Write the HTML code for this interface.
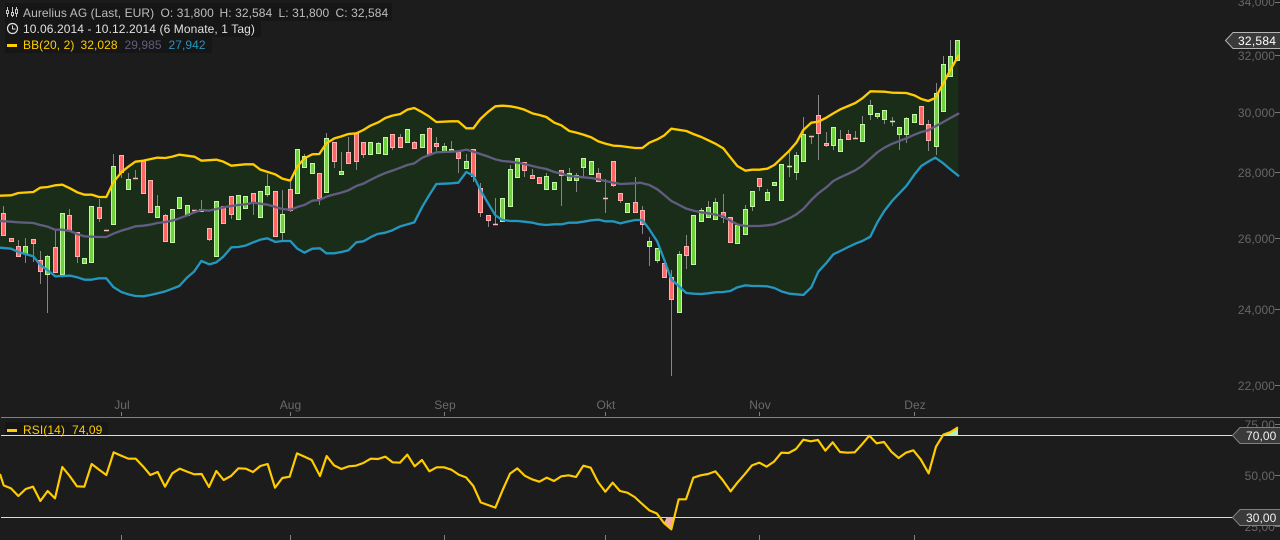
<!DOCTYPE html>
<html><head><meta charset="utf-8"><style>
html,body{margin:0;padding:0;background:#1c1c1c;width:1280px;height:540px;overflow:hidden}
svg{display:block}
text{font-family:"Liberation Sans",sans-serif;font-size:12px;letter-spacing:.08px}
</style></head><body>
<svg width="1280" height="540" viewBox="0 0 1280 540" xmlns="http://www.w3.org/2000/svg">
<rect width="1280" height="540" fill="#1c1c1c"/>
<g transform="scale(.33333)">
<polygon fill="#1a2d19" points="0,587 33,586 55,579 100,576 121,563 143,561 165,556 187,554 210,565 232,577 253,584 275,584 297,591 319,591 340,547 364,517 385,500 406,485 430,482 472,473 496,474 517,470 538,464 583,470 604,482 649,479 670,485 694,497 736,493 760,493 781,509 826,523 847,536 871,542 892,500 913,475 937,463 958,462 979,430 1003,415 1024,409 1045,402 1069,400 1090,390 1111,377 1135,367 1156,354 1177,347 1201,342 1222,329 1243,324 1267,337 1288,350 1309,366 1354,364 1375,364 1399,385 1420,385 1441,357 1465,335 1486,319 1507,317 1531,319 1552,323 1573,329 1597,340 1618,345 1639,351 1663,368 1684,376 1708,393 1729,398 1750,404 1774,412 1795,424 1816,431 1840,437 1861,438 1882,441 1906,444 1927,444 1948,428 1972,418 1993,406 2014,386 2059,393 2080,402 2104,411 2125,421 2146,431 2170,445 2191,472 2212,498 2236,512 2257,509 2278,509 2302,506 2323,495 2344,475 2368,452 2389,428 2410,390 2434,368 2455,365 2479,353 2500,340 2521,328 2545,318 2566,309 2587,295 2611,274 2653,275 2677,278 2719,279 2743,286 2764,297 2785,303 2806,294 2830,250 2851,210 2875,168 2875,1200 0,1200"/>
<polygon fill="#1c1c1c" points="0,743 33,746 55,756 76,762 100,769 121,795 142,810 166,829 187,828 210,827 232,832 253,839 275,839 297,835 319,835 340,861 364,876 385,883 406,888 430,889 451,885 472,880 496,874 517,866 538,858 562,832 583,814 604,783 628,793 649,787 670,770 694,742 715,741 736,737 760,727 781,719 802,715 826,726 847,723 871,723 892,746 913,758 937,746 960,745 979,760 1003,760 1024,756 1045,751 1069,727 1090,724 1111,712 1132,702 1156,698 1177,691 1201,679 1222,673 1243,667 1267,620 1288,585 1309,552 1333,551 1354,550 1375,548 1399,516 1420,527 1441,570 1465,611 1486,646 1507,660 1531,663 1552,663 1573,665 1597,668 1618,673 1639,675 1663,673 1684,673 1708,668 1729,668 1750,665 1774,661 1795,659 1816,664 1840,664 1861,670 1882,665 1906,660 1927,660 1948,688 1972,725 1993,780 2014,838 2038,860 2059,879 2080,881 2104,882 2125,880 2146,877 2170,876 2191,873 2212,862 2236,856 2257,858 2278,858 2302,859 2323,864 2344,874 2368,881 2389,883 2410,885 2434,862 2455,815 2479,789 2500,763 2521,753 2545,741 2566,731 2587,723 2611,710 2632,667 2653,633 2677,602 2719,558 2743,524 2764,498 2785,485 2806,473 2830,490 2851,508 2875,527 2880,527 2880,1260 0,1260"/>
</g>
<!-- wicks -->
<path fill="none" stroke="#858585" stroke-width="1" d="M3.5 206V236M18.5 240V257M25.5 238V263M33.5 244V262M40.5 251V284M47.5 255V313M55.5 230V273M69.5 209V231M77.5 232V263M99.5 199V222M113.5 154V225M121.5 155V178M128.5 173V190M135.5 170V178M157.5 195V218M165.5 214V242M201.5 200V212M209.5 228V241M231.5 196V219M253.5 193V215M267.5 174V197M282.5 190V240M290.5 182V212M304.5 154V168M319.5 173V205M326.5 133V193M334.5 142V168M341.5 152V175M348.5 137V164M356.5 133V170M363.5 142V158M378.5 142V154M392.5 134V150M400.5 134V148M414.5 141V149M429.5 127V155M436.5 137V151M444.5 143V152M451.5 141V152M458.5 152V173M466.5 154V169M473.5 149V182M480.5 183V217M488.5 215V227M495.5 198V225M510.5 165V207M524.5 162V177M532.5 169V179M546.5 173V190M561.5 170V206M569.5 168V181M576.5 173V192M583.5 158V177M598.5 168V182M605.5 179V213M613.5 161V187M620.5 193V203M635.5 177V213M642.5 206V234M649.5 237V266M657.5 248V263M671.5 270V376M679.5 251V313M686.5 235V269M701.5 208V222M708.5 201V218M715.5 198V220M723.5 194V223M745.5 205V235M752.5 191V211M759.5 178V191M767.5 189V201M789.5 152V177M796.5 152V180M803.5 117V162M811.5 136V144M818.5 95V160M826.5 132V147M833.5 127V150M840.5 130V152M848.5 130V140M855.5 131V138M862.5 116V142M870.5 100V120M877.5 113V119M884.5 110V124M892.5 117V126M899.5 127V150M906.5 117V143M928.5 120V151M936.5 83V155M943.5 56V112M950.5 40V77"/>
<!-- red bodies -->
<path fill="#ff6666" stroke="#ffb0b0" stroke-width="1" d="M1.5 213.5h4v22h-4zM9.5 238.5h4v3h-4zM16.5 246.5h4v10h-4zM31.5 239.5h4v4h-4zM38.5 260.5h4v11h-4zM53.5 247.5h4v25h-4zM67.5 215.5h4v15h-4zM75.5 232.5h4v24h-4zM97.5 207.5h4v11h-4zM119.5 155.5h4v17h-4zM141.5 161.5h4v32h-4zM148.5 180.5h4v32h-4zM163.5 215.5h4v26h-4zM207.5 228.5h4v11h-4zM221.5 206.5h4v17h-4zM229.5 196.5h4v18h-4zM251.5 193.5h4v9h-4zM273.5 191.5h4v45h-4zM288.5 189.5h4v21h-4zM317.5 173.5h4v25h-4zM332.5 142.5h4v19h-4zM346.5 152.5h4v11h-4zM354.5 133.5h4v28h-4zM361.5 142.5h4v12h-4zM390.5 134.5h4v13h-4zM398.5 137.5h4v10h-4zM412.5 142.5h4v6h-4zM427.5 128.5h4v26h-4zM434.5 143.5h4v3h-4zM456.5 152.5h4v6h-4zM471.5 149.5h4v27h-4zM478.5 188.5h4v24h-4zM486.5 215.5h4v5h-4zM522.5 162.5h4v8h-4zM530.5 175.5h4v3h-4zM537.5 177.5h4v6h-4zM559.5 170.5h4v5h-4zM596.5 173.5h4v8h-4zM611.5 161.5h4v24h-4zM618.5 193.5h4v7h-4zM633.5 202.5h4v10h-4zM640.5 210.5h4v14h-4zM662.5 263.5h4v14h-4zM669.5 277.5h4v22h-4zM684.5 246.5h4v9h-4zM721.5 212.5h4v5h-4zM728.5 217.5h4v25h-4zM757.5 178.5h4v8h-4zM816.5 115.5h4v18h-4zM824.5 143.5h4v2h-4zM846.5 134.5h4v5h-4zM919.5 106.5h4v18h-4zM926.5 124.5h4v16h-4z"/>
<!-- green bodies -->
<path fill="#6fd13c" stroke="#c2f5a6" stroke-width="1" d="M23.5 246.5h4v7h-4zM45.5 256.5h4v18h-4zM60.5 213.5h4v61h-4zM82.5 258.5h4v5h-4zM89.5 206.5h4v56h-4zM111.5 166.5h4v58h-4zM126.5 179.5h4v10h-4zM155.5 206.5h4v11h-4zM170.5 209.5h4v33h-4zM177.5 197.5h4v11h-4zM185.5 205.5h4v10h-4zM199.5 209.5h4v2h-4zM214.5 201.5h4v55h-4zM236.5 195.5h4v24h-4zM243.5 196.5h4v12h-4zM258.5 191.5h4v26h-4zM265.5 186.5h4v8h-4zM280.5 214.5h4v18h-4zM295.5 149.5h4v44h-4zM302.5 156.5h4v11h-4zM310.5 163.5h4v10h-4zM324.5 138.5h4v54h-4zM339.5 171.5h4v3h-4zM368.5 142.5h4v12h-4zM376.5 143.5h4v10h-4zM383.5 137.5h4v17h-4zM405.5 129.5h4v13h-4zM420.5 134.5h4v13h-4zM442.5 146.5h4v5h-4zM449.5 149.5h4v2h-4zM464.5 161.5h4v7h-4zM500.5 198.5h4v23h-4zM508.5 169.5h4v37h-4zM515.5 158.5h4v19h-4zM544.5 176.5h4v13h-4zM552.5 182.5h4v7h-4zM567.5 173.5h4v7h-4zM574.5 175.5h4v5h-4zM581.5 158.5h4v9h-4zM589.5 161.5h4v13h-4zM625.5 203.5h4v9h-4zM647.5 241.5h4v5h-4zM655.5 248.5h4v12h-4zM677.5 254.5h4v58h-4zM691.5 215.5h4v49h-4zM699.5 210.5h4v11h-4zM706.5 207.5h4v10h-4zM713.5 202.5h4v17h-4zM735.5 225.5h4v18h-4zM743.5 209.5h4v25h-4zM750.5 191.5h4v15h-4zM765.5 192.5h4v8h-4zM772.5 182.5h4v3h-4zM779.5 164.5h4v36h-4zM794.5 155.5h4v17h-4zM801.5 134.5h4v27h-4zM831.5 127.5h4v18h-4zM838.5 139.5h4v12h-4zM860.5 124.5h4v17h-4zM868.5 105.5h4v9h-4zM875.5 113.5h4v3h-4zM882.5 110.5h4v9h-4zM897.5 127.5h4v7h-4zM904.5 118.5h4v16h-4zM912.5 114.5h4v8h-4zM934.5 93.5h4v53h-4zM941.5 64.5h4v47h-4zM948.5 56.5h4v20h-4zM955.5 40.5h4v20h-4z"/>
<!-- dojis -->
<path fill="none" stroke="#ffb8b8" stroke-width="1.4" d="M104 230.5h5M133 178.5h5M192 210.5h5M493 224.5h5M603 198.5h5M809 136.5h5M853 138.5h5"/>
<path fill="none" stroke="#c2f5a6" stroke-width="1.6" d="M787 166.5h5M890 121.5h5"/>
<g transform="scale(.33333)" fill="none" stroke-linejoin="round" stroke-linecap="round" stroke-width="7">
<polyline stroke="#ffcc00" points="0,587 33,586 55,579 100,576 121,563 143,561 165,556 187,554 210,565 232,577 253,584 275,584 297,591 319,591 340,547 364,517 385,500 406,485 430,482 472,473 496,474 517,470 538,464 583,470 604,482 649,479 670,485 694,497 736,493 760,493 781,509 826,523 847,536 871,542 892,500 913,475 937,463 958,462 979,430 1003,415 1024,409 1045,402 1069,400 1090,390 1111,377 1135,367 1156,354 1177,347 1201,342 1222,329 1243,324 1267,337 1288,350 1309,366 1354,364 1375,364 1399,385 1420,385 1441,357 1465,335 1486,319 1507,317 1531,319 1552,323 1573,329 1597,340 1618,345 1639,351 1663,368 1684,376 1708,393 1729,398 1750,404 1774,412 1795,424 1816,431 1840,437 1861,438 1882,441 1906,444 1927,444 1948,428 1972,418 1993,406 2014,386 2059,393 2080,402 2104,411 2125,421 2146,431 2170,445 2191,472 2212,498 2236,512 2257,509 2278,509 2302,506 2323,495 2344,475 2368,452 2389,428 2410,390 2434,368 2455,365 2479,353 2500,340 2521,328 2545,318 2566,309 2587,295 2611,274 2653,275 2677,278 2719,279 2743,286 2764,297 2785,303 2806,294 2830,250 2851,210 2875,168"/>
<polyline stroke="#625c80" points="0,663 33,665 55,667 100,669 121,675 143,680 165,689 187,689 210,693 232,702 253,709 297,711 319,711 340,701 364,692 385,686 406,679 430,677 451,674 472,669 496,666 517,662 538,655 562,646 583,637 604,630 628,632 649,627 670,622 694,618 715,615 736,613 760,608 781,611 802,614 826,621 847,627 871,629 892,621 913,615 937,602 958,600 979,590 1003,583 1024,578 1045,571 1069,558 1090,551 1111,540 1135,528 1156,519 1177,512 1201,503 1222,495 1243,490 1267,473 1288,465 1309,457 1333,456 1354,455 1375,454 1399,449 1420,455 1441,462 1465,470 1486,478 1507,483 1531,485 1552,488 1573,492 1597,498 1618,503 1639,507 1663,516 1684,521 1708,528 1729,530 1750,532 1774,534 1795,538 1816,543 1840,548 1861,552 1882,551 1906,550 1920,548 1948,555 1972,568 1993,585 2014,603 2038,615 2059,626 2080,632 2104,637 2125,640 2146,644 2170,650 2191,662 2212,673 2236,678 2278,678 2302,676 2323,673 2344,665 2368,655 2389,643 2410,627 2434,600 2455,580 2479,562 2500,543 2521,532 2545,521 2566,511 2587,497 2611,476 2632,457 2653,443 2677,431 2698,423 2719,415 2743,404 2764,396 2785,391 2806,379 2830,366 2851,354 2875,341"/>
<polyline stroke="#2496c0" points="0,743 33,746 55,756 76,762 100,769 121,795 142,810 166,829 187,828 210,827 232,832 253,839 275,839 297,835 319,835 340,861 364,876 385,883 406,888 430,889 451,885 472,880 496,874 517,866 538,858 562,832 583,814 604,783 628,793 649,787 670,770 694,742 715,741 736,737 760,727 781,719 802,715 826,726 847,723 871,723 892,746 913,758 937,746 960,745 979,760 1003,760 1024,756 1045,751 1069,727 1090,724 1111,712 1132,702 1156,698 1177,691 1201,679 1222,673 1243,667 1267,620 1288,585 1309,552 1333,551 1354,550 1375,548 1399,516 1420,527 1441,570 1465,611 1486,646 1507,660 1531,663 1552,663 1573,665 1597,668 1618,673 1639,675 1663,673 1684,673 1708,668 1729,668 1750,665 1774,661 1795,659 1816,664 1840,664 1861,670 1882,665 1906,660 1927,660 1948,688 1972,725 1993,780 2014,838 2038,860 2059,879 2080,881 2104,882 2125,880 2146,877 2170,876 2191,873 2212,862 2236,856 2257,858 2278,858 2302,859 2323,864 2344,874 2368,881 2389,883 2410,885 2434,862 2455,815 2479,789 2500,763 2521,753 2545,741 2566,731 2587,723 2611,710 2632,667 2653,633 2677,602 2719,558 2743,524 2764,498 2785,485 2806,473 2830,490 2851,508 2875,527"/>
</g>
<!-- legend -->
<rect x="5" y="3" width="387" height="18" fill="#161616"/>
<rect x="5" y="21" width="256" height="16" fill="#161616"/>
<rect x="5" y="37" width="207" height="16" fill="#161616"/>
<rect x="5" y="422" width="103" height="15" fill="#161616"/>
<g fill="none" stroke="#c8c8c8" stroke-width="1">
<path d="M7.5 7V17M12.5 7V17M16.5 7V17" />
<rect x="6.5" y="10.5" width="2" height="3" fill="#1c1c1c"/><rect x="11.5" y="12.5" width="2" height="3" fill="#1c1c1c"/><rect x="15.5" y="9.5" width="2" height="4" fill="#1c1c1c"/>
</g>
<circle cx="12.5" cy="28.5" r="5" fill="none" stroke="#e0e0e0" stroke-width="1.2"/>
<path d="M12.5 25.5V29H15.5" fill="none" stroke="#e0e0e0" stroke-width="1"/>
<rect x="7" y="44" width="10" height="3" fill="#ffcc00"/>
<g fill="#bdbdbd">
<text x="23" y="17">Aurelius AG (Last, EUR)</text>
<text x="160.5" y="17">O: 31,800</text>
<text x="219.5" y="17">H: 32,584</text>
<text x="278.5" y="17">L: 31,800</text>
<text x="335.5" y="17">C: 32,584</text>
</g>
<text x="23" y="33" fill="#e0e0e0" textLength="232">10.06.2014 - 10.12.2014 (6 Monate, 1 Tag)</text>
<text x="23" y="49" fill="#ffcc00">BB(20, 2)</text>
<text x="80.5" y="49" fill="#ffcc00">32,028</text>
<text x="124.5" y="49" fill="#625c80">29,985</text>
<text x="168.5" y="49" fill="#2496c0">27,942</text>
<rect x="7" y="429" width="10" height="3" fill="#ffcc00"/>
<text x="23" y="434" fill="#ffcc00">RSI(14)</text>
<text x="72" y="434" fill="#ffcc00">74,09</text>
<!-- separators -->
<path d="M1 417.5H1280" stroke="#808080" stroke-width="1"/>
<path d="M1 435.5H1233M1 517.5H1233" stroke="#dcdcdc" stroke-width="1"/>
<!-- month ticks -->
<path fill="none" stroke="#808080" stroke-width="1" d="M121.5 412V416M290.5 412V416M444.5 412V416M605.5 412V416M759.5 412V416M914.5 412V416M121.5 535V540M290.5 535V540M444.5 535V540M605.5 535V540M759.5 535V540M914.5 535V540"/>
<g fill="#6a6a6a" text-anchor="middle">
<text x="122" y="409">Jul</text><text x="290.5" y="409">Aug</text><text x="445" y="409">Sep</text><text x="606" y="409">Okt</text><text x="760" y="409">Nov</text><text x="915" y="409">Dez</text>
</g>
<!-- RSI -->
<g transform="translate(0,400) scale(.33333)">
<polygon fill="#f4a9a9" points="2000,352 2026,352 2014,388 1992,369"/>
<polygon fill="#b8ecb0" points="2830,105 2852,96 2874,82 2874,105"/>
<polyline fill="none" stroke="#ffcc00" stroke-width="6.5" stroke-linejoin="round" points="0,222 11,256 33,265 55,288 77,267 99,260 121,303 143,273 165,295 187,201 209,228 231,259 253,260 275,192 297,209 319,225 341,157 363,167 385,176 407,176 429,199 451,225 473,216 495,260 517,220 539,206 561,215 583,223 605,222 627,261 649,213 671,240 693,228 715,205 737,206 759,216 781,198 803,192 825,263 847,234 869,230 891,160 913,170 935,180 960,228 980,168 1002,196 1024,207 1046,199 1068,197 1090,189 1112,176 1134,177 1156,170 1178,187 1200,188 1222,164 1244,199 1266,180 1288,214 1310,202 1332,202 1354,209 1376,224 1398,232 1420,258 1442,307 1464,315 1486,323 1508,270 1530,221 1552,205 1574,227 1596,238 1618,245 1640,233 1662,243 1684,229 1706,226 1728,231 1750,197 1772,203 1794,246 1816,275 1838,248 1860,273 1882,278 1904,291 1920,306 1948,331 1970,340 1992,369 2014,388 2036,298 2058,298 2080,233 2102,226 2124,222 2146,214 2168,240 2192,274 2212,248 2234,223 2256,196 2278,188 2300,200 2322,185 2344,158 2366,159 2388,147 2410,119 2432,124 2454,120 2476,152 2498,127 2520,156 2542,158 2564,157 2586,133 2608,107 2630,130 2652,126 2674,155 2696,174 2718,158 2740,151 2762,178 2786,220 2808,140 2830,104 2852,96 2874,82"/>
</g>
<!-- y axis -->
<g fill="#666" text-anchor="end">
<text x="1275" y="6">34,000</text><text x="1275" y="60">32,000</text><text x="1275" y="117">30,000</text><text x="1275" y="177">28,000</text><text x="1275" y="243">26,000</text><text x="1275" y="314">24,000</text><text x="1275" y="390">22,000</text>
<text x="1275" y="429">75,00</text><text x="1275" y="480">50,00</text><text x="1275" y="531">25,00</text>
</g>
<path fill="none" stroke="#777" stroke-width="1" d="M1275 2.5h5M1275 55.5h5M1275 112.5h5M1275 172.5h5M1275 238.5h5M1275 309.5h5M1275 385.5h5M1275 424.5h5M1275 475.5h5M1275 526.5h5"/>
<!-- tags -->
<path d="M1280 32.5H1233L1225.5 40.5L1233 48.5H1280" fill="#3a3a3a" stroke="#b5b5b5"/>
<text x="1238" y="45" fill="#fff" style="letter-spacing:.25px">32,584</text>
<path d="M1280 427.5H1240L1232.5 435.5L1240 443.5H1280" fill="#3a3a3a" stroke="#808080"/>
<text x="1246" y="440" fill="#f0f0f0">70,00</text>
<path d="M1280 509.5H1240L1232.5 517.5L1240 525.5H1280" fill="#3a3a3a" stroke="#808080"/>
<text x="1246" y="522" fill="#f0f0f0">30,00</text>
</svg>
</body></html>
